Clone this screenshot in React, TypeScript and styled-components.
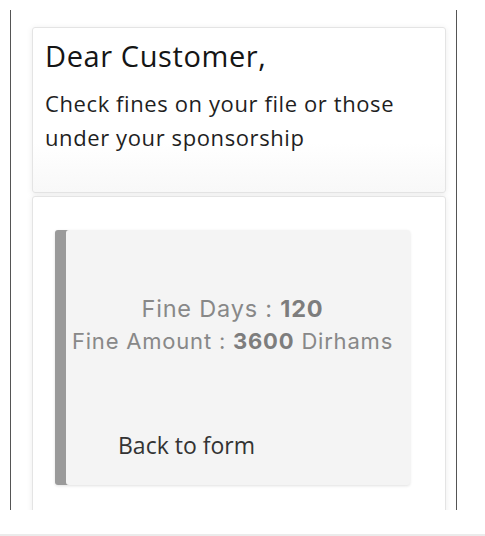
import styled, { createGlobalStyle } from 'styled-components';

const GlobalStyle = createGlobalStyle`
  html, body {
    margin: 0;
    padding: 0;
    background: #ffffff;
  }
  body {
    font-family: 'Open Sans', 'Noto Sans', sans-serif;
  }
`;

const Screen = styled.div`
  width: 485px;
  height: 536px;
  display: flex;
  flex-direction: column;
  overflow: hidden;
  background: #ffffff;
`;

const Frame = styled.div`
  margin: 10px 0 0 10px;
  width: 447px;
  height: 500px;
  border-left: 1px solid #555;
  border-right: 1px solid #555;
  padding: 17px 10px 0 21px;
  box-sizing: border-box;
  display: flex;
  flex-direction: column;
  gap: 3px;
  overflow: hidden;
`;

const Card = styled.section<{ $height: number }>`
  flex: none;
  height: ${(p) => p.$height}px;
  background: #ffffff;
  border: 1px solid #e4e4e4;
  border-radius: 3px;
  box-shadow: 0 1px 6px rgba(0, 0, 0, 0.08);
  box-sizing: border-box;
`;

const Intro = styled(Card)`
  padding: 8px 12px 0 12px;
  background: linear-gradient(#ffffff 70%, #f8f8f8);
`;

const Title = styled.h1`
  margin: 0;
  font-family: 'Open Sans', 'Noto Sans', sans-serif;
  font-weight: 400;
  font-size: 29px;
  letter-spacing: 0.6px;
  line-height: 40px;
  color: #151515;
`;

const Lead = styled.p`
  margin: 10px 0 0;
  font-family: 'Open Sans', 'Noto Sans', sans-serif;
  font-size: 22px;
  letter-spacing: 0.6px;
  line-height: 34px;
  color: #1f1f1f;
`;

const ResultCard = styled(Card)`
  padding: 33px 35px 0 22px;
`;

const FineBox = styled.div`
  height: 255px;
  background: #f4f4f4;
  border-radius: 3px;
  box-shadow: inset 11px 0 0 #9a9a9a, 0 1px 3px rgba(0, 0, 0, 0.12);
  display: flex;
  flex-direction: column;
  box-sizing: border-box;
  padding-top: 63px;
`;

const FineLine = styled.div<{ $size: number }>`
  text-align: center;
  font-family: 'Inter', 'Lato', sans-serif;
  font-size: ${(p) => p.$size}px;
  letter-spacing: 0.8px;
  line-height: 32px;
  color: #888888;

  b {
    font-weight: 700;
    color: #7d7d7d;
  }
`;

const BackLink = styled.a`
  margin: auto 0 24px 63px;
  font-family: 'Open Sans', 'Noto Sans', sans-serif;
  font-size: 23px;
  color: #333;
  text-decoration: none;
  cursor: pointer;
`;

const BottomBar = styled.div`
  margin-top: 24px;
  height: 2px;
  background: #ebebeb;
`;

const App = () => {
  const fineDays = 120;
  const fineAmount = 3600;

  return (
    <Screen>
      <GlobalStyle />
      <Frame>
        <Intro $height={166}>
          <Title>Dear Customer,</Title>
          <Lead>Check fines on your file or those under your sponsorship</Lead>
        </Intro>
        <ResultCard $height={340}>
          <FineBox>
            <FineLine $size={23.5}>
              Fine Days : <b>{fineDays}</b>
            </FineLine>
            <FineLine $size={22}>
              Fine Amount : <b>{fineAmount}</b> Dirhams
            </FineLine>
            <BackLink>Back to form</BackLink>
          </FineBox>
        </ResultCard>
      </Frame>
      <BottomBar />
    </Screen>
  );
};

export default App;
